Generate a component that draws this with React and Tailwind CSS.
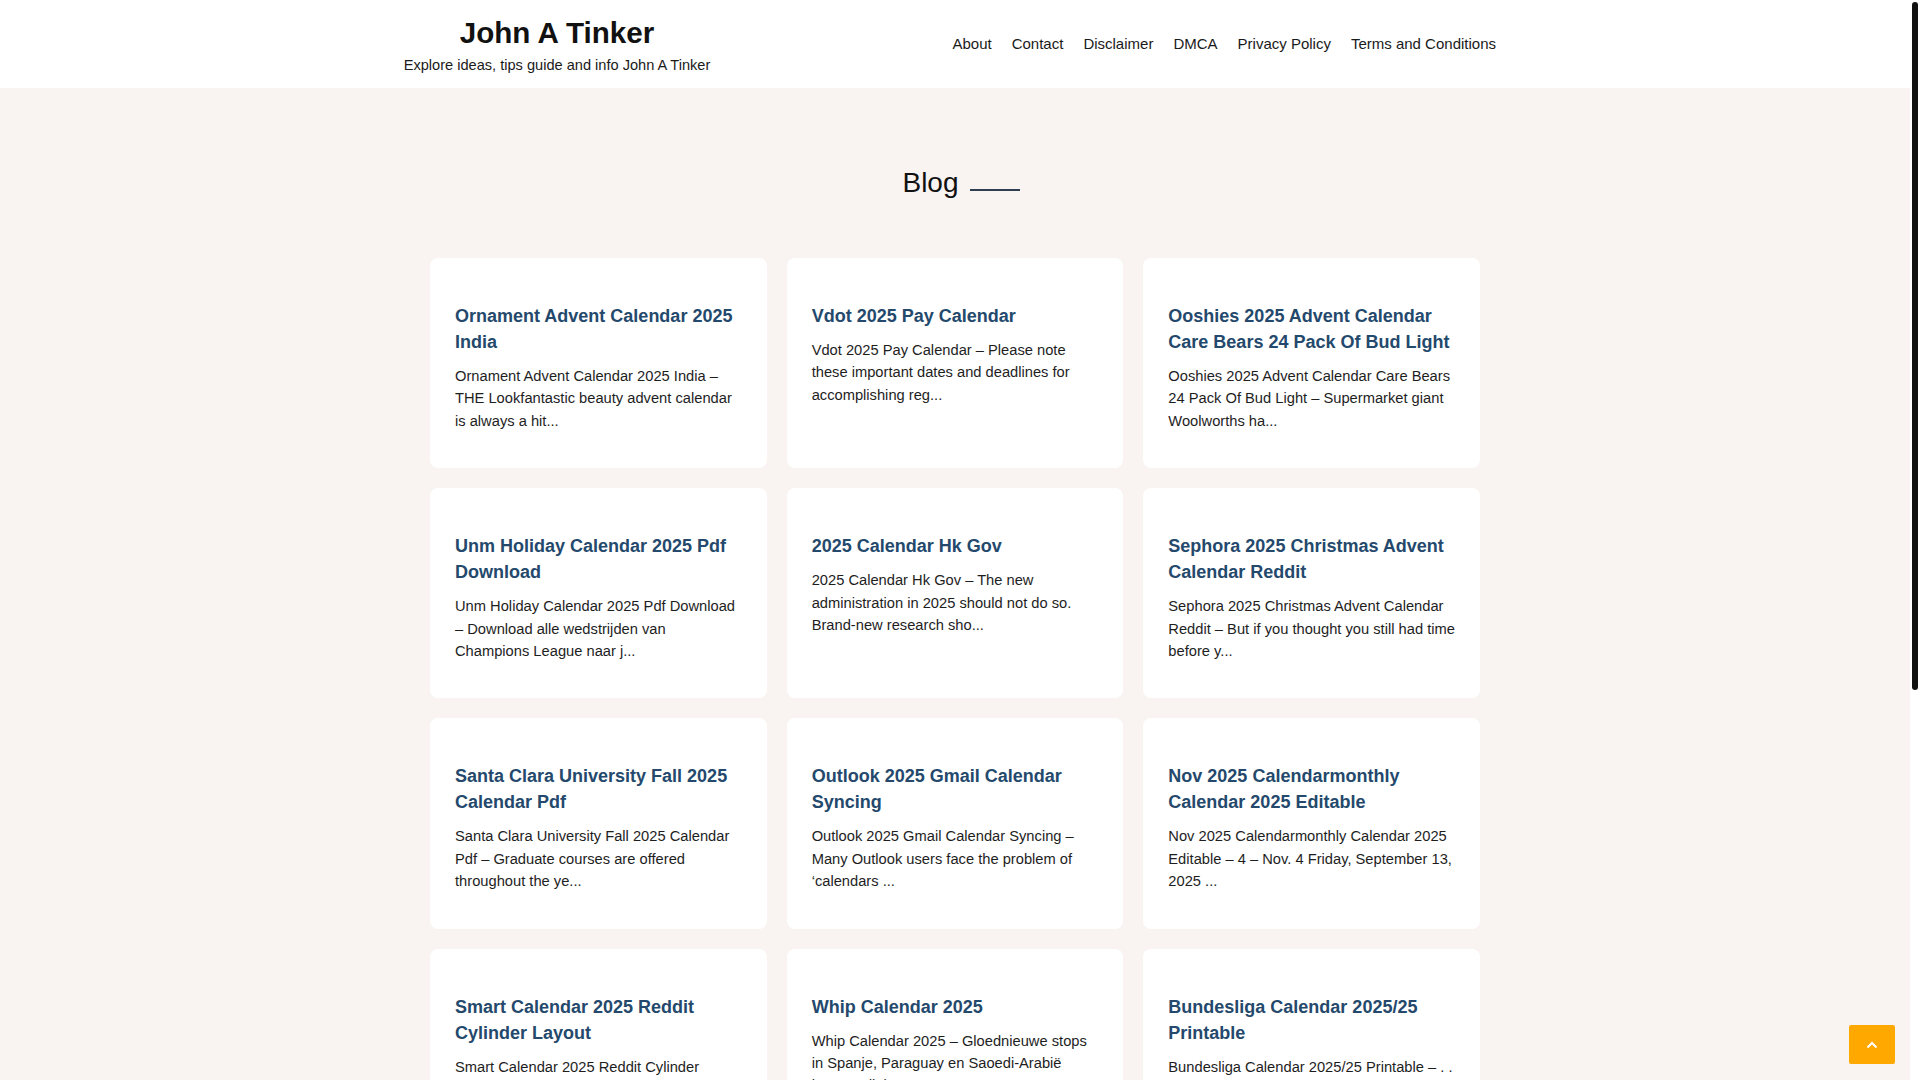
import React from "react";

const posts = [
  ["Ornament Advent Calendar 2025 India", "Ornament Advent Calendar 2025 India – THE Lookfantastic beauty advent calendar is always a hit..."],
  ["Vdot 2025 Pay Calendar", "Vdot 2025 Pay Calendar – Please note these important dates and deadlines for accomplishing reg..."],
  ["Ooshies 2025 Advent Calendar Care Bears 24 Pack Of Bud Light", "Ooshies 2025 Advent Calendar Care Bears 24 Pack Of Bud Light – Supermarket giant Woolworths ha..."],
  ["Unm Holiday Calendar 2025 Pdf Download", "Unm Holiday Calendar 2025 Pdf Download – Download alle wedstrijden van Champions League naar j..."],
  ["2025 Calendar Hk Gov", "2025 Calendar Hk Gov – The new administration in 2025 should not do so. Brand-new research sho..."],
  ["Sephora 2025 Christmas Advent Calendar Reddit", "Sephora 2025 Christmas Advent Calendar Reddit – But if you thought you still had time before y..."],
  ["Santa Clara University Fall 2025 Calendar Pdf", "Santa Clara University Fall 2025 Calendar Pdf – Graduate courses are offered throughout the ye..."],
  ["Outlook 2025 Gmail Calendar Syncing", "Outlook 2025 Gmail Calendar Syncing – Many Outlook users face the problem of ‘calendars ..."],
  ["Nov 2025 Calendarmonthly Calendar 2025 Editable", "Nov 2025 Calendarmonthly Calendar 2025 Editable – 4 – Nov. 4 Friday, September 13, 2025 ..."],
  ["Smart Calendar 2025 Reddit Cylinder Layout", "Smart Calendar 2025 Reddit Cylinder Layout – Whether you are planning ahead for the year, a cyl..."],
  ["Whip Calendar 2025", "Whip Calendar 2025 – Gloednieuwe stops in Spanje, Paraguay en Saoedi-Arabië kunnen dit jaa..."],
  ["Bundesliga Calendar 2025/25 Printable", "Bundesliga Calendar 2025/25 Printable – . . . The new season schedule is now available to vie..."],
  ["Printable Calendar 2025 Monthly", "Printable Calendar 2025 Monthly – Plan your days, weeks and months ahead with these free prin..."],
  ["Fiscal Year 2025 Calendar Template", "Fiscal Year 2025 Calendar Template – A fiscal year calendar helps businesses keep track of th..."],
  ["Lunar Calendar 2025 Chinese New Year", "Lunar Calendar 2025 Chinese New Year – The Year of the Snake begins on January 29 and brin..."],
];

const nav = ["About", "Contact", "Disclaimer", "DMCA", "Privacy Policy", "Terms and Conditions"];

function Card({ title, excerpt }) {
  return (
    <div className="bg-white rounded-[8px] min-h-[210px] px-[25px] pt-[45px] pb-[36px]">
      <h2 className="text-[18px] leading-[26px] font-bold text-[#24496c]">{title}</h2>
      <p className="mt-[10px] text-[14.7px] leading-[22.4px] text-[#1e1e1e]">{excerpt}</p>
    </div>
  );
}

export default function App() {
  return (
    <div
      className="flex h-screen bg-white"
      style={{ fontFamily: '"Liberation Sans", Arial, sans-serif' }}
    >
      <div className="flex-1 h-full overflow-y-auto bg-[#f9f4f1] [scrollbar-width:none] [&::-webkit-scrollbar]:hidden">
        <header className="bg-white h-[88px]">
          <div className="w-[1200px] mx-auto flex h-full">
            <div className="w-[404px] text-center pt-[15px]">
              <div className="text-[29.6px] leading-[35px] font-bold text-[#111]">John A Tinker</div>
              <div className="mt-[4px] text-[14.6px] leading-[22px] text-[#1a1a1a]">Explore ideas, tips guide and info John A Tinker</div>
            </div>
            <nav className="ml-auto pr-[59px] flex items-center gap-[20px] text-[15px] text-[#1a1a1a]">
              {nav.map((n) => (
                <a key={n} href="#" className="leading-[22px]">{n}</a>
              ))}
            </nav>
          </div>
        </header>

        <main className="pb-[80px]">
          <div className="mt-[78px] flex justify-center ml-[12px]">
            <div className="flex items-start">
              <h1 className="text-[28px] leading-[34px] text-[#111]">Blog</h1>
              <span className="block w-[50px] h-[2px] bg-[#2c3e50] ml-[11px] mt-[23px]"></span>
            </div>
          </div>

          <div className="mt-[58px] w-[1050px] mx-auto grid grid-cols-3 gap-[20px]">
            {posts.map(([t, e]) => (
              <Card key={t} title={t} excerpt={e} />
            ))}
          </div>

          <div className="mt-[60px] flex justify-center gap-[8px] text-[15px]">
            <span className="w-[36px] h-[36px] flex items-center justify-center bg-[#ffa800] text-white rounded-[3px]">1</span>
            <span className="w-[36px] h-[36px] flex items-center justify-center bg-white text-[#222] rounded-[3px]">2</span>
            <span className="w-[36px] h-[36px] flex items-center justify-center bg-white text-[#222] rounded-[3px]">3</span>
            <span className="h-[36px] px-[12px] flex items-center justify-center bg-white text-[#222] rounded-[3px]">Next</span>
          </div>
        </main>

        <footer className="bg-white py-[40px] text-center text-[14px] text-[#333]">
          Copyright © 2025 John A Tinker
        </footer>
      </div>

      <div className="w-[10px] h-full bg-white shrink-0">
        <div className="mt-[2px] mx-[2px] h-[688px] rounded-full bg-[#111111]"></div>
      </div>

      <a
        href="#"
        className="fixed right-[25px] bottom-[16px] w-[46px] h-[39px] bg-[#ffa800] rounded-[2px] flex items-center justify-center"
      >
        <svg width="12" height="8" viewBox="0 0 12 8" fill="none">
          <polyline points="1.5,6.5 6,2 10.5,6.5" stroke="white" strokeWidth="2" />
        </svg>
      </a>
    </div>
  );
}
